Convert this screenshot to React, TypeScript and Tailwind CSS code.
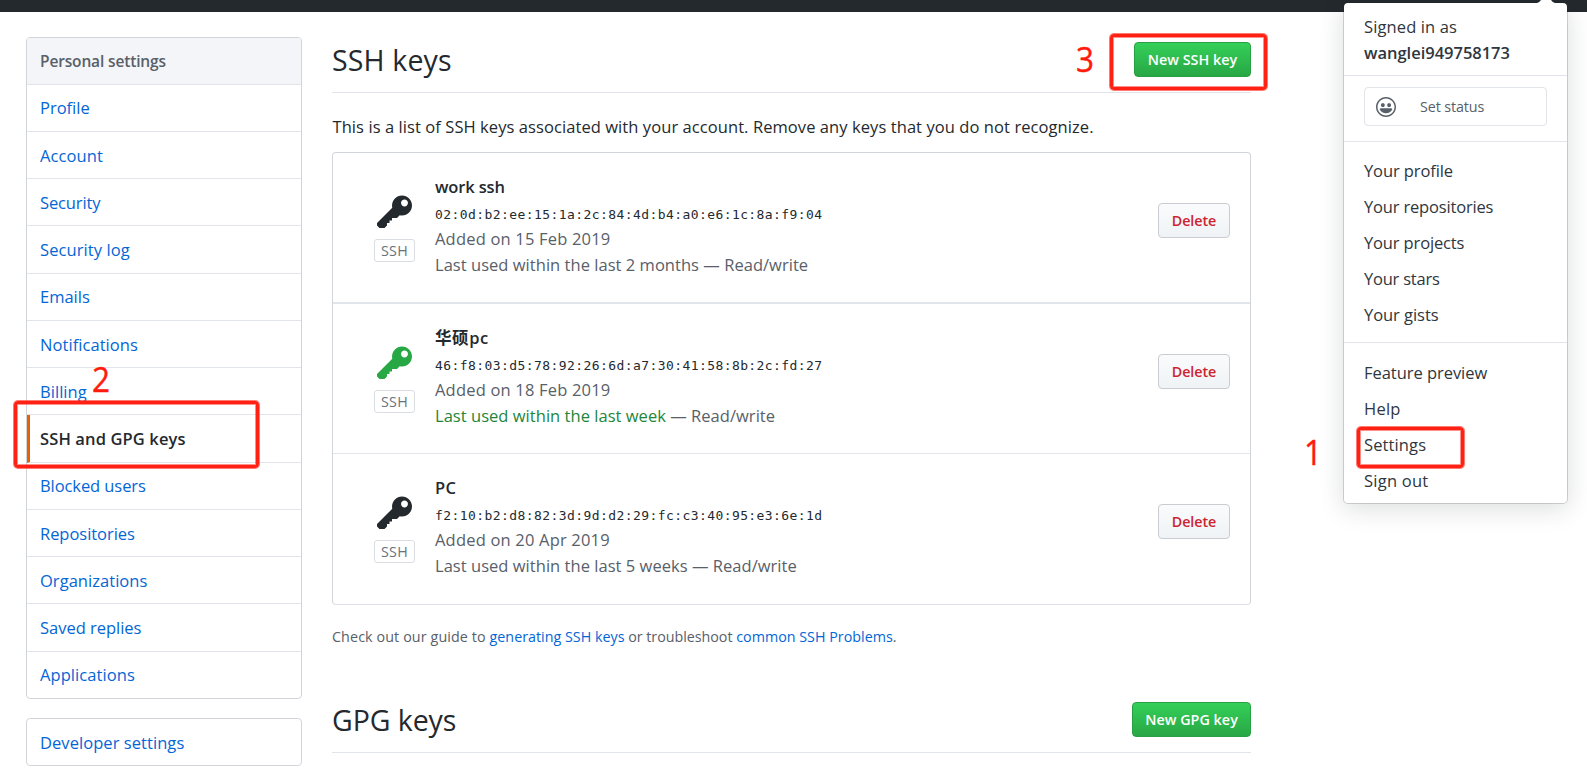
import React from "react";

const FONT = "font-['Open_Sans','Noto_Sans_CJK_SC',sans-serif]";

type Item = { label: string; track: string };

const NAV: Item[] = [
  { label: "Profile", track: "tracking-normal" },
  { label: "Account", track: "tracking-[0.08px]" },
  { label: "Security", track: "tracking-[-0.12px]" },
  { label: "Security log", track: "tracking-[0.08px]" },
  { label: "Emails", track: "tracking-normal" },
  { label: "Notifications", track: "tracking-[0.06px]" },
  { label: "Billing", track: "tracking-[0.05px]" },
  { label: "SSH and GPG keys", track: "tracking-[0.13px]" },
  { label: "Blocked users", track: "tracking-[-0.08px]" },
  { label: "Repositories", track: "tracking-[-0.04px]" },
  { label: "Organizations", track: "tracking-[0.04px]" },
  { label: "Saved replies", track: "tracking-[-0.02px]" },
  { label: "Applications", track: "tracking-[0.08px]" },
];
const ACTIVE = "SSH and GPG keys";

type Key = {
  title: string;
  titleTrack: string;
  fingerprint: string;
  added: string;
  lastUsed: string;
  recent: boolean;
  row: string;
};

const KEYS: Key[] = [
  {
    title: "work ssh",
    titleTrack: "tracking-[-0.15px]",
    fingerprint: "02:0d:b2:ee:15:1a:2c:84:4d:b4:a0:e6:1c:8a:f9:04",
    added: "Added on 15 Feb 2019",
    lastUsed: "Last used within the last 2 months",
    recent: false,
    row: "h-[151px] border-b-2",
  },
  {
    title: "华硕pc",
    titleTrack: "tracking-[0.6px]",
    fingerprint: "46:f8:03:d5:78:92:26:6d:a7:30:41:58:8b:2c:fd:27",
    added: "Added on 18 Feb 2019",
    lastUsed: "Last used within the last week",
    recent: true,
    row: "h-[150px] border-b",
  },
  {
    title: "PC",
    titleTrack: "tracking-[0.3px]",
    fingerprint: "f2:10:b2:d8:82:3d:9d:d2:29:fc:c3:40:95:e3:6e:1d",
    added: "Added on 20 Apr 2019",
    lastUsed: "Last used within the last 5 weeks",
    recent: false,
    row: "h-[150px]",
  },
];

const MENU_TOP: Item[] = [
  { label: "Your profile", track: "tracking-[-0.1px]" },
  { label: "Your repositories", track: "tracking-[-0.17px]" },
  { label: "Your projects", track: "tracking-[-0.14px]" },
  { label: "Your stars", track: "tracking-[-0.22px]" },
  { label: "Your gists", track: "tracking-[-0.05px]" },
];
const MENU_BOTTOM: Item[] = [
  { label: "Feature preview", track: "tracking-[-0.04px]" },
  { label: "Help", track: "tracking-[0.25px]" },
  { label: "Settings", track: "tracking-[0.12px]" },
  { label: "Sign out", track: "tracking-[0.24px]" },
];

function KeyIcon({ className }: { className: string }) {
  return (
    <svg viewBox="0 0 14 16" width="35" height="40" fill="currentColor" className={className}>
      <path
        fillRule="evenodd"
        d="M12.83 2.17C12.08 1.42 11.14 1.03 10 1c-1.13.03-2.08.42-2.83 1.17S6.04 3.86 6.01 5c0 .3.03.59.09.89L0 12v1l1 1h2l1-1v-1h1v-1h1v-1h2l1.09-1.11c.3.08.59.11.91.11 1.14-.03 2.08-.42 2.83-1.17S13.97 6.14 14 5c-.03-1.14-.42-2.08-1.17-2.83zM11 5.38c-.77 0-1.38-.61-1.38-1.38 0-.77.61-1.38 1.38-1.38.77 0 1.38.61 1.38 1.38 0 .77-.61 1.38-1.38 1.38z"
      />
    </svg>
  );
}

function SmileyIcon() {
  return (
    <svg viewBox="0 0 16 16" width="20" height="20" fill="currentColor">
      <path
        fillRule="evenodd"
        d="M8 0C3.58 0 0 3.58 0 8s3.58 8 8 8 8-3.58 8-8-3.58-8-8-8zm4.81 12.81a6.72 6.72 0 0 1-2.17 1.45c-.83.36-1.72.53-2.64.53-.92 0-1.81-.17-2.64-.53-.81-.34-1.55-.83-2.17-1.45a6.773 6.773 0 0 1-1.45-2.17A6.59 6.59 0 0 1 1.21 8c0-.92.17-1.81.53-2.64.34-.81.83-1.55 1.45-2.17.62-.62 1.36-1.11 2.17-1.45A6.59 6.59 0 0 1 8 1.21c.92 0 1.81.17 2.64.53.81.34 1.55.83 2.17 1.45.62.62 1.11 1.36 1.45 2.17.36.83.53 1.72.53 2.64 0 .92-.17 1.81-.53 2.64-.34.81-.83 1.55-1.45 2.17zM4 6.8v-.59c0-.66.53-1.19 1.2-1.19h.59c.66 0 1.19.53 1.19 1.19v.59c0 .67-.53 1.2-1.19 1.2H5.2C4.53 8 4 7.47 4 6.8zm5 0v-.59c0-.66.53-1.19 1.2-1.19h.59c.66 0 1.19.53 1.19 1.19v.59c0 .67-.53 1.2-1.19 1.2h-.59C9.53 8 9 7.47 9 6.8zm4 3.2c-.72 1.88-2.91 3-5 3s-4.28-1.13-5-3c-.14-.39.23-1 .66-1h8.59c.41 0 .89.61.75 1z"
      />
    </svg>
  );
}

function Sidebar() {
  return (
    <aside className="flex w-[276px] shrink-0 flex-col gap-[19px] text-[16.5px]">
      <nav className="flex h-[662px] flex-col overflow-hidden rounded-[4px] border border-[#d1d5da]">
        <div className="flex h-[46.6px] shrink-0 items-center border-b border-[#e1e4e8] bg-[#f3f5f8] pl-[13px] pt-[2px] text-[15.5px] font-semibold tracking-[-0.15px] text-[#586069]">
          Personal settings
        </div>
        {NAV.map(({ label, track }) => (
          <a
            key={label}
            className={
              "flex h-[47.25px] shrink-0 items-center border-b border-[#e1e4e8] pr-3 pt-[2px] " +
              track +
              (label === ACTIVE
                ? " border-l-[3px] border-l-[#e36209] pl-[10px] font-semibold text-[#24292e]"
                : " pl-[13px] text-[#0366d6]")
            }
          >
            {label}
          </a>
        ))}
      </nav>
      <nav className="flex h-[48px] items-center rounded-[4px] border border-[#d1d5da] pl-[13px] pt-[2px] tracking-[0.06px] text-[#0366d6]">
        Developer settings
      </nav>
    </aside>
  );
}

function SectionHead({
  title,
  action,
  width,
  track,
}: {
  title: string;
  action: string;
  width: string;
  track: string;
}) {
  return (
    <div className="flex h-[56px] items-start justify-between border-b border-[#e1e4e8] pt-[5px]">
      <h2 className={"text-[28.5px] leading-[36px] text-[#24292e] " + track}>{title}</h2>
      <button
        className={
          "flex h-[35px] items-center justify-center rounded-[4px] border border-[#279f43] bg-linear-to-b from-[#34d058] to-[#28a745] text-[14.3px] font-semibold tracking-[0.05px] text-white " +
          width
        }
      >
        {action}
      </button>
    </div>
  );
}

function KeyRow({ item }: { item: Key }) {
  return (
    <li className={"flex items-start border-[#e1e4e8] pl-[41px] pr-5 " + item.row}>
      <div className="flex w-[41px] shrink-0 flex-col items-center gap-[6px] pt-[40px]">
        <KeyIcon className={item.recent ? "text-[#28a745]" : "text-[#24292e]"} />
        <span className="flex h-[23px] w-[41px] items-center justify-center rounded-[3px] border border-[#dadde1] text-[14.3px] tracking-[0.3px] text-[#6a737d]">
          SSH
        </span>
      </div>
      <div className="ml-[20px] flex flex-1 flex-col pt-[20.5px] text-[16.5px] leading-[26px] text-[#586069]">
        <strong className={"h-[26px] font-semibold text-[#24292e] " + item.titleTrack}>{item.title}</strong>
        <code className="h-[26px] font-['DejaVu_Sans_Mono',monospace] text-[13px] leading-[30px] tracking-[0.42px] text-[#24292e]">
          {item.fingerprint}
        </code>
        <span className="tracking-[0.19px]">{item.added}</span>
        <span className="tracking-[0.035px]">
          <span className={item.recent ? "text-[#22863a]" : ""}>{item.lastUsed}</span> — Read/write
        </span>
      </div>
      <button className="mt-[50px] flex h-[35px] w-[72px] items-center justify-center rounded-[4px] border border-[#c9ccd0] bg-linear-to-b from-[#fafbfc] to-[#eff3f6] text-[14.3px] font-semibold tracking-[-0.07px] text-[#cb2431]">
        Delete
      </button>
    </li>
  );
}

function MenuGroup({ items }: { items: Item[] }) {
  return (
    <>
      {items.map(({ label, track }) => (
        <a key={label} className={"flex h-[36.15px] shrink-0 items-center " + track}>
          {label}
        </a>
      ))}
    </>
  );
}

function UserMenu() {
  return (
    <div className="absolute left-[1343px] top-[2px] flex h-[502px] w-[225px] flex-col rounded-[5px] border border-[rgba(27,31,35,0.18)] bg-white bg-clip-padding text-[16.5px] text-[#2f363d] shadow-[0_5px_24px_rgba(27,31,35,0.15)]">
      <svg className="absolute -top-[3px] right-[12px]" width="18" height="3" viewBox="0 0 18 3">
        <path d="M0 3Q2.5 2.5 4 0h10q1.5 2.5 4 3z" fill="#fff" />
      </svg>
      <div className="flex h-[73px] flex-col border-b border-[#e1e4e8] pl-[20px] pt-[10.5px] leading-[26px]">
        <span className="tracking-[0.12px]">Signed in as</span>
        <strong className="font-semibold tracking-[-0.02px]">wanglei949758173</strong>
      </div>
      <div className="h-[66px] border-b border-[#e1e4e8] px-5 pt-[11px]">
        <div className="flex h-[39px] items-center rounded-[4px] border border-[#e1e4e8] pl-[11px] text-[14.3px] tracking-[-0.1px] text-[#586069]">
          <SmileyIcon />
          <span className="ml-[24px] pt-[1px]">Set status</span>
        </div>
      </div>
      <div className="flex h-[201px] flex-col border-b border-[#e1e4e8] pl-[20px] pt-[11px]">
        <MenuGroup items={MENU_TOP} />
      </div>
      <div className="flex flex-col pl-[20px] pt-[12px]">
        <MenuGroup items={MENU_BOTTOM} />
      </div>
    </div>
  );
}

function Callout({ box, digit, label }: { box: string; digit: string; label: string }) {
  return (
    <>
      <div
        className={
          "absolute rounded-[4px] border-[3px] border-[#ff2113] shadow-[0_0_0_1px_rgba(255,33,19,0.6),inset_0_0_0_1px_rgba(255,33,19,0.5)] " +
          box
        }
      />
      <span
        className={
          "absolute w-[20px] scale-x-90 text-center text-[35px] leading-[40px] text-[#ff1a0c] [-webkit-text-stroke:0.4px_#ff1a0c] " +
          digit
        }
      >
        {label}
      </span>
    </>
  );
}

export default function App() {
  return (
    <div className={"relative h-[772px] w-[1587px] overflow-hidden bg-white " + FONT}>
      <header className="h-[12px] bg-[#24292e]" />
      <div className="flex gap-[30px] pl-[26px] pt-[25px]">
        <Sidebar />
        <main className="w-[919px] shrink-0">
          <SectionHead title="SSH keys" action="New SSH key" width="w-[117px]" track="tracking-[0.15px]" />
          <p className="mt-[20.5px] whitespace-nowrap pl-[0.5px] text-[16.5px] leading-[26px] tracking-[0.075px] text-[#24292e]">
            This is a list of SSH keys associated with your account. Remove any keys that you do not recognize.
          </p>
          <ul className="mt-[12.5px] rounded-[4px] border border-[#d1d5da] border-b-[#dcdfe4]">
            {KEYS.map((k) => (
              <KeyRow key={k.title} item={k} />
            ))}
          </ul>
          <p className="mb-[49px] mt-[21px] text-[14.3px] leading-[22px] text-[#586069]">
            <span className="tracking-[0.11px]">Check out our guide to </span>
            <a className="tracking-[0.01px] text-[#0366d6]">generating SSH keys</a>
            <span className="tracking-[-0.03px]"> or troubleshoot </span>
            <a className="tracking-[0.01px] text-[#0366d6]">common SSH Problems</a>.
          </p>
          <SectionHead title="GPG keys" action="New GPG key" width="w-[119px]" track="tracking-[-0.06px]" />
        </main>
      </div>
      <UserMenu />
      <Callout box="left-[1357px] top-[427px] h-[41px] w-[107px]" digit="left-[1303px] top-[432px]" label="1" />
      <Callout box="left-[14px] top-[401px] h-[67px] w-[245px]" digit="left-[91px] top-[359px]" label="2" />
      <Callout box="left-[1110px] top-[34px] h-[56px] w-[157px]" digit="left-[1075px] top-[39px]" label="3" />
    </div>
  );
}
